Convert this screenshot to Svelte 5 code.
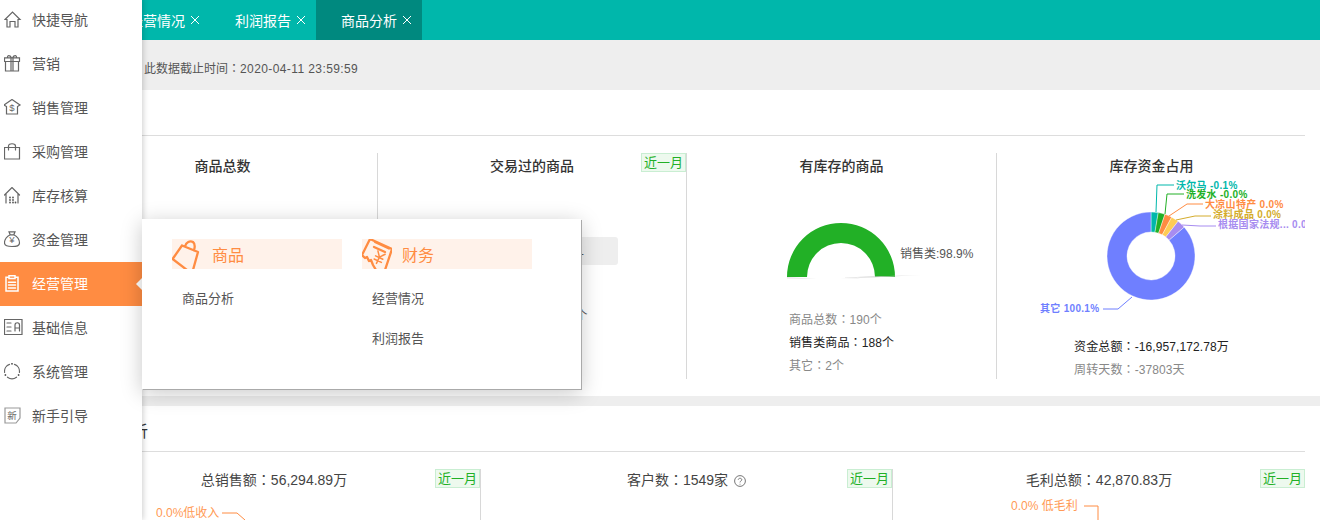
<script>
  const menu = [
    { label: "快捷导航", d: "M1 8.5 8.5 1 16 8.5H14V16H11V10.5H6V16H3V8.5Z" },
    { label: "营销", d: "M.5 6.5V2.8H15.5V6.5M1.5 6.5V16H14.5V6.5ZM7 2.8V16M9 2.8V16M7.5 2.8C6 0 3 0 3.6 2.8M8.5 2.8C10 0 13 0 12.4 2.8" },
    { label: "销售管理", d: "M8 .5 16 6 13.5 7.5V15H2.5V7.5L0 6Z", glyph: "$" },
    { label: "采购管理", d: "M.5 4.5H15.5V16H.5ZM4.5 7V3C4.5 0 11.5 0 11.5 3V7" },
    {
      label: "库存核算",
      d: "M.5 8 8 .5 15.5 8M2 7V16M14 7V16",
      dots: [[6, 10.5], [9, 10.5], [6, 13], [9, 13], [6, 15.5], [9, 15.5], [11.5, 15.5]]
    },
    { label: "资金管理", d: "M5 .8H11L9.8 3.8H6.2ZM6.2 3.8C2 6 .5 9.5 .5 12 .5 15 3 15.5 8 15.5 13 15.5 15.5 15 15.5 12 15.5 9.5 14 6 9.8 3.8", glyph: "¥" },
    { label: "经营管理", d: "M5 2.2H2V16H14V2.2H11M5 .8H11V3.5H5ZM4.5 7.2H11.5M4.5 10H11.5M4.5 13H11.5", active: true },
    { label: "基础信息", d: "M.5.5H18V15.5H.5ZM3 4H7M3 8H7M3 12H7M11 12V6C11 3 15.5 3 15.5 6V12M11 9H15.5" },
    {
      label: "系统管理",
      d: "M5.5 1.4A7.5 7.5 0 0 0 .6 9.5M10.5 1.4A7.5 7.5 0 0 1 15.4 9.5M3.5 14.2A7.5 7.5 0 0 0 12.5 14.2",
      dots: [[8, .8], [1.4, 12], [14.6, 12]]
    },
    { label: "新手引导", d: "M1 1H16V11L12 16H1Z", glyph: "新", faint: true }
  ];

  const tabs = [
    { label: "经营情况" },
    { label: "利润报告" },
    { label: "商品分析", active: true }
  ];

  // donut: angles in degrees, clockwise from twelve o'clock
  const cx = 155;
  const cy = 77;
  const slices = [
    { from: 0, to: 9.5, color: "#00b7ab" },
    { from: 9.5, to: 18.5, color: "#22b026" },
    { from: 18.5, to: 28, color: "#ff8c42" },
    { from: 28, to: 38, color: "#ffcc55" },
    { from: 38, to: 49, color: "#a78cf0" },
    { from: 49, to: 360, color: "#6f7fff" }
  ];
  const labels = [
    { text: "沃尔马 -0.1%", x: 180, y: 7, color: "#00b7ab", line: "160,33 161,6 178,6" },
    { text: "洗发水 -0.0%", x: 190, y: 16, color: "#22b026", line: "169,35 171,15 188,15" },
    { text: "大凉山特产 0.0%", x: 209, y: 26, color: "#ff8c42", line: "173,37 191,25 207,25" },
    { text: "涂料成品 0.0%", x: 217, y: 36, color: "#d4ac2c", line: "180,41 199,37 215,37" },
    { text: "根据国家法规... 0.0%", x: 222, y: 46, color: "#a78cf0", line: "186,46 204,47 220,47" },
    { text: "其它 100.1%", x: 44, y: 130, color: "#6f7fff", line: "136,118 122,130 107,130" }
  ];

  function point(r, deg) {
    const rad = (deg * Math.PI) / 180;
    return `${(cx + r * Math.sin(rad)).toFixed(2)} ${(cy - r * Math.cos(rad)).toFixed(2)}`;
  }

  function arc(from, to, outer = 44, inner = 24) {
    const large = to - from > 180 ? 1 : 0;
    return `M${point(outer, from)}A${outer} ${outer} 0 ${large} 1 ${point(outer, to)}L${point(inner, to)}A${inner} ${inner} 0 ${large} 0 ${point(inner, from)}Z`;
  }
</script>

<div class="page">
  <header class="tabbar">
    {#each tabs as tab}
      <div class="tab" class:active={tab.active}>
        <span>{tab.label}</span>
        <svg class="close" viewBox="0 0 10 10" width="10" height="10"><path d="M1 1 9 9M9 1 1 9" /></svg>
      </div>
    {/each}
  </header>

  <main class="content">
    <div class="notice">此数据截止时间<span class="colon">：</span><span class="time">2020-04-11 23:59:59</span></div>

    <section class="panel">
      <h2>商品</h2>
      <div class="cols four">
        <div class="col">
          <h3>商品总数</h3>
        </div>

        <div class="col">
          <h3>交易过的商品</h3>
          <span class="badge">近一月</span>
          <div class="pill">交易过的商品<span class="colon">：</span>181</div>
          <p class="trade">交易过的商品<span class="colon">：</span>36个</p>
        </div>

        <div class="col">
          <h3>有库存的商品</h3>
          <svg class="chart" viewBox="0 0 309 120" width="309" height="120">
            <defs>
              <linearGradient id="sliver" x1="0" x2="1" y1="0" y2="0">
                <stop offset="0" stop-color="#aaa" />
                <stop offset="1" stop-color="#eee" />
              </linearGradient>
            </defs>
            <path d="M100 98A54 54 0 0 1 208 98H188A34 34 0 0 0 120 98Z" fill="#22b026" />
            <polygon points="100,98 130,100 100,99.5" fill="#e8e8e8" />
            <polygon points="153,100 235,96 153,98.5 188,98" fill="url(#sliver)" />
            <text x="213" y="79" class="gauge-label">销售类:98.9%</text>
          </svg>
          <ul class="lines gauge-lines">
            <li>商品总数<span class="colon">：</span>190个</li>
            <li class="strong">销售类商品<span class="colon">：</span>188个</li>
            <li>其它<span class="colon">：</span>2个</li>
          </ul>
        </div>

        <div class="col">
          <h3>库存资金占用</h3>
          <svg class="chart donut" viewBox="0 0 309 150" width="309" height="150">
            {#each slices as s}
              <path d={arc(s.from, s.to)} fill={s.color} stroke="#fff" stroke-width=".4" />
            {/each}
            {#each labels as l}
              <polyline points={l.line} fill="none" stroke={l.color} />
              <text x={l.x} y={l.y + 3} fill={l.color} class="pie-label">{l.text}</text>
            {/each}
          </svg>
          <div class="centered">
            <ul class="lines">
              <li class="strong">资金总额<span class="colon">：</span>-16,957,172.78万</li>
              <li>周转天数<span class="colon">：</span>-37803天</li>
            </ul>
          </div>
        </div>
      </div>
    </section>

    <section class="panel">
      <h2>经营分析</h2>
      <div class="cols three">
        <div class="col">
          <h4>总销售额<span class="colon">：</span>56,294.89万</h4>
          <span class="badge">近一月</span>
          <svg class="chart" viewBox="0 0 412 60" width="412" height="60">
            <text x="88" y="26" class="callout">0.0%低收入</text>
            <polyline points="154,22 169,22 177,29" fill="none" stroke="#ff8c42" />
          </svg>
        </div>
        <div class="col">
          <h4>
            客户数<span class="colon">：</span>1549家
            <svg class="help" viewBox="0 0 12 12" width="12" height="12">
              <circle cx="6" cy="6" r="5.4" />
              <path d="M4.3 4.8C4.3 2.7 7.8 2.8 7.8 4.7 7.8 6 6 5.9 6 7.4M6 8.8V9.6" />
            </svg>
          </h4>
          <span class="badge">近一月</span>
        </div>
        <div class="col">
          <h4>毛利总额<span class="colon">：</span>42,870.83万</h4>
          <span class="badge">近一月</span>
          <svg class="chart" viewBox="0 0 412 60" width="412" height="60">
            <text x="118" y="19" class="callout">0.0% 低毛利</text>
            <polyline points="191,15 205,15 205,30" fill="none" stroke="#ff8c42" />
          </svg>
        </div>
      </div>
    </section>
  </main>

  <nav class="sidebar">
    {#each menu as item}
      <div class="item" class:active={item.active}>
        <svg class="icon" class:faint={item.faint} viewBox="0 0 19 18" width="19" height="18">
          <path d={item.d} />
          {#if item.glyph}
            <text x="8" y="12">{item.glyph}</text>
          {/if}
          {#each item.dots ?? [] as [x, y]}
            <circle cx={x} cy={y} r=".9" />
          {/each}
        </svg>
        <span>{item.label}</span>
      </div>
    {/each}
  </nav>

  <div class="flyout">
    <div class="group">
      <div class="group-head">
        <svg viewBox="0 0 30 30" width="30" height="30">
          <path d="M10 6.5.6 20 15 31M10 6.5 26 13 21 31M13 7.5C14 3 18 1.5 21 3 23.5 5 23 8 22 11.5" />
        </svg>
        商品
      </div>
      <a href="#goods">商品分析</a>
    </div>
    <div class="group">
      <div class="group-head">
        <svg viewBox="0 0 30 30" width="30" height="30">
          <path d="M8 0 0 16 3 19 5 18 7 22 9 21 11 26 14 31M8 0 30 10 23 31M13 3 27 9.5M12 8 23 13" />
          <path class="thin" transform="rotate(25 17 19)" d="M13 13 17 18 21 13M17 18V25M13 18.5H21M13 22H21" />
        </svg>
        <span>财务</span>
      </div>
      <a href="#ops">经营情况</a>
      <a href="#profit">利润报告</a>
    </div>
  </div>
</div>

<style>
  :global(body) {
    margin: 0;
    background: #eee;
    color: #555;
    font-family: "Liberation Sans", "Noto Sans CJK SC", sans-serif;
    overflow: hidden;
  }

  .page {
    position: relative;
    height: 100vh;
    overflow: hidden;
  }

  .colon {
    font-family: "Noto Sans CJK TC", sans-serif;
    line-height: 0;
  }

  .tabbar {
    height: 40px;
    background: #00b7ab;
    display: flex;
    padding-left: 104px;
  }

  .tab {
    width: 106px;
    box-sizing: border-box;
    padding-left: 25px;
    display: flex;
    align-items: center;
    gap: 5px;
    color: #fff;
    font-size: 14px;
  }

  .tab.active {
    background: #00897f;
  }

  .close path {
    fill: none;
    stroke: #fff;
  }

  .content {
    margin-left: 68px;
  }

  .notice {
    height: 50px;
    box-sizing: border-box;
    padding: 19px 0 0 76px;
    font-size: 12px;
    line-height: 20px;
    color: #555;
  }

  .time {
    letter-spacing: 0.4px;
  }

  .panel {
    background: #fff;
    margin-bottom: 10px;
    padding-right: 15px;
  }

  h2 {
    margin: 0;
    height: 45px;
    padding-left: 16px;
    border-bottom: 1px solid #ddd;
    font-size: 16px;
    font-weight: 400;
    line-height: 51px;
    color: #333;
  }

  .cols {
    display: grid;
    padding: 17px 0;
  }

  .four {
    grid-template-columns: 310px 309px 310px 1fr;
    margin-right: -1px;
  }

  .three {
    grid-template-columns: repeat(3, 1fr);
  }

  .col {
    position: relative;
    height: 226px;
    border-right: 1px solid #d8d8d8;
    box-sizing: border-box;
  }

  .col:last-child {
    border-right: 0;
  }

  h3 {
    margin: 0;
    font-size: 14px;
    font-weight: 500;
    line-height: 26px;
    text-align: center;
    color: #333;
  }

  h4 {
    margin: 0;
    font-size: 14px;
    font-weight: 400;
    line-height: 22px;
    text-align: center;
    color: #444;
  }

  .badge {
    position: absolute;
    top: 0;
    right: 0;
    width: 45px;
    height: 19px;
    box-sizing: border-box;
    background: #edf9ee;
    border: 1px solid #c9eed2;
    color: #22b026;
    font-size: 13px;
    line-height: 17px;
    text-align: center;
  }

  .pill {
    width: 172px;
    height: 28px;
    margin: 58px auto 0;
    background: #eee;
    border-radius: 3px;
    font-size: 12px;
    line-height: 28px;
    text-align: center;
  }

  .trade {
    margin: 40px 0 0 100px;
    font-size: 12px;
    line-height: 23px;
  }

  .chart {
    display: block;
  }

  .donut {
    margin-left: -1px;
  }

  .lines {
    list-style: none;
    margin: 0;
    padding: 0;
    font-size: 12px;
    line-height: 23px;
    letter-spacing: 0.1px;
    color: #888;
  }

  .strong {
    color: #222;
  }

  .gauge-lines {
    margin: 10px 0 0 102px;
  }

  .centered {
    display: flex;
    justify-content: center;
    margin-top: 7px;
  }

  .gauge-label {
    font-size: 12px;
    fill: #555;
  }

  .pie-label {
    font-size: 10px;
    font-weight: 700;
    letter-spacing: 0.3px;
  }

  .callout {
    font-size: 12px;
    fill: #ff9a55;
  }

  .help {
    vertical-align: -2px;
    margin-left: 2px;
  }

  .help circle,
  .help path {
    fill: none;
    stroke: #777;
  }

  .sidebar {
    position: absolute;
    top: -2px;
    left: 0;
    bottom: 0;
    width: 142px;
    background: #fff;
    box-shadow: 1px 0 6px rgba(0, 0, 0, 0.2);
  }

  .item {
    position: relative;
    height: 44px;
    padding-left: 4px;
    display: flex;
    align-items: center;
    gap: 9px;
    font-size: 14px;
    color: #555;
  }

  .item span {
    padding-bottom: 2px;
  }

  .item.active {
    background: #ff8c42;
    color: #fff;
  }

  .item.active::after {
    content: "";
    position: absolute;
    right: 0;
    top: 16px;
    border: 6px solid transparent;
    border-right-color: #fff;
    border-left-width: 0;
  }

  .icon path {
    fill: none;
    stroke: #666;
    stroke-width: 1.2;
    stroke-linecap: round;
  }

  .icon circle {
    fill: #555;
  }

  .item.active .icon path {
    stroke: #fff;
    stroke-width: 1.5;
  }

  .icon.faint path {
    stroke: #999;
  }

  .icon text {
    font-size: 9.5px;
    fill: #666;
    text-anchor: middle;
  }

  .flyout {
    position: absolute;
    top: 219px;
    left: 142px;
    width: 439px;
    height: 170px;
    box-sizing: border-box;
    padding: 20px 0 0 30px;
    background: #fff;
    display: grid;
    grid-template-columns: 170px 170px;
    gap: 20px;
    align-items: start;
    box-shadow: 1px 1px 0 #aaa, 0 4px 20px rgba(0, 0, 0, 0.22);
  }

  .group-head {
    height: 30px;
    display: flex;
    align-items: center;
    gap: 10px;
    margin-bottom: 10px;
    background: #fff2ea;
    color: #ff8c42;
    font-size: 16px;
  }

  .group-head svg {
    flex: none;
  }

  .group-head path {
    fill: none;
    stroke: #ff8c42;
    stroke-width: 2.3;
    stroke-linecap: round;
    stroke-linejoin: round;
  }

  .group-head path.thin {
    stroke-width: 1.5;
  }

  .group a {
    display: block;
    padding-left: 10px;
    color: #555;
    font-size: 13px;
    line-height: 40px;
    text-decoration: none;
  }
</style>
